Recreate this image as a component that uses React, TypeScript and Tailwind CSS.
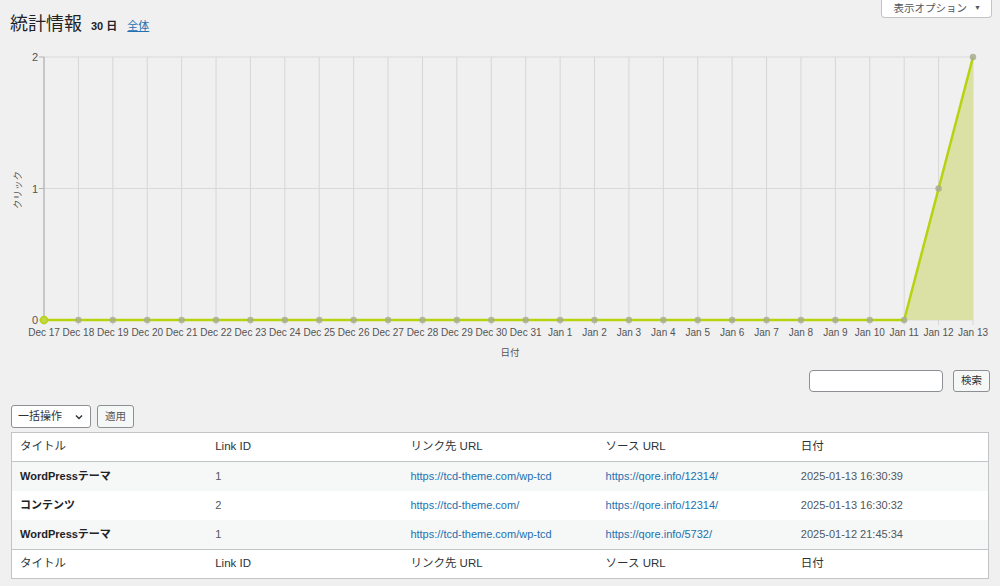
import React from "react";

const dates = [
  "Dec 17","Dec 18","Dec 19","Dec 20","Dec 21","Dec 22","Dec 23","Dec 24","Dec 25","Dec 26","Dec 27","Dec 28","Dec 29","Dec 30","Dec 31",
  "Jan 1","Jan 2","Jan 3","Jan 4","Jan 5","Jan 6","Jan 7","Jan 8","Jan 9","Jan 10","Jan 11","Jan 12","Jan 13",
];
const values = dates.map((_, i) => (i === 26 ? 1 : i === 27 ? 2 : 0));

const X0 = 44;
const X1 = 973;
const YTOP = 15;
const YBOT = 278;
const step = (X1 - X0) / (dates.length - 1);
const xAt = (i: number) => X0 + i * step;
const yAt = (v: number) => YBOT - (v / 2) * (YBOT - YTOP);

function Chart() {
  const linePts = values.map((v, i) => `${xAt(i)},${yAt(v)}`).join(" ");
  const fillPts = `${xAt(25)},${YBOT} ${xAt(26)},${yAt(1)} ${xAt(27)},${yAt(2)} ${xAt(27)},${YBOT}`;
  return (
    <svg width={1000} height={322} className="block" style={{ fontFamily: '"Liberation Sans", "Noto Sans CJK JP", sans-serif' }}>
      {[0, 1, 2].map((v) => (
        <line key={v} x1={X0} x2={X1} y1={yAt(v)} y2={yAt(v)} stroke="#d9d9d9" strokeWidth={1} />
      ))}
      {dates.map((_, i) => (
        <line key={i} x1={xAt(i)} x2={xAt(i)} y1={YTOP} y2={YBOT + 5} stroke="#d6d6d6" strokeWidth={1} />
      ))}
      <line x1={X0} x2={X0} y1={YTOP} y2={YBOT} stroke="#b4b4b4" strokeWidth={1.2} />
      {[0, 1, 2].map((v) => (
        <line key={"t" + v} x1={X0 - 5} x2={X0} y1={yAt(v)} y2={yAt(v)} stroke="#b4b4b4" strokeWidth={1} />
      ))}
      {[0, 1, 2].map((v) => (
        <text key={"l" + v} x={38} y={yAt(v) + 4} textAnchor="end" fontSize={11} fill="#545454">
          {v}
        </text>
      ))}
      <polygon points={fillPts} fill="#dbe1a4" />
      <polyline points={linePts} fill="none" stroke="#b7d20f" strokeWidth={2.5} strokeLinejoin="round" />
      {values.map((v, i) =>
        i === 0 ? (
          <circle key={i} cx={xAt(i)} cy={yAt(v)} r={3.5} fill="#c4d84a" stroke="#b7d20f" strokeWidth={1.5} />
        ) : (
          <circle key={i} cx={xAt(i)} cy={yAt(v)} r={3.2} fill="#a8ad90" fillOpacity={0.85} />
        )
      )}
      {dates.map((d, i) => (
        <text key={"d" + i} x={xAt(i)} y={294} textAnchor="middle" fontSize={10} fill="#545454">
          {d}
        </text>
      ))}
      <text x={510} y={314} textAnchor="middle" fontSize={9.5} fill="#545454">
        日付
      </text>
      <text x={0} y={0} transform="translate(21,148) rotate(-90)" textAnchor="middle" fontSize={9.5} fill="#545454">
        クリック
      </text>
    </svg>
  );
}

const rows = [
  { title: "WordPressテーマ", id: "1", link: "https://tcd-theme.com/wp-tcd", src: "https://qore.info/12314/", date: "2025-01-13 16:30:39" },
  { title: "コンテンツ", id: "2", link: "https://tcd-theme.com/", src: "https://qore.info/12314/", date: "2025-01-13 16:30:32" },
  { title: "WordPressテーマ", id: "1", link: "https://tcd-theme.com/wp-tcd", src: "https://qore.info/5732/", date: "2025-01-12 21:45:34" },
];

function HeadRow({ top }: { top?: boolean }) {
  return (
    <div
      className={`grid grid-cols-5 h-[29px] items-center text-[11.5px] text-[#2c3338] bg-white ${
        top ? "border-b border-[#c3c4c7]" : "border-t border-[#c3c4c7]"
      }`}
    >
      <div className="px-2">タイトル</div>
      <div className="px-2">Link ID</div>
      <div className="px-2">リンク先 URL</div>
      <div className="px-2">ソース URL</div>
      <div className="px-2">日付</div>
    </div>
  );
}

export default function App() {
  return (
    <div
      className="w-[1000px] h-[586px] bg-[#f0f0f1] relative overflow-hidden text-[#1d2327]"
      style={{ fontFamily: '"Liberation Sans", "Noto Sans CJK JP", sans-serif' }}
    >
      <div className="absolute right-[8px] top-0 h-[18px] pl-[12px] pr-[10px] bg-white border border-t-0 border-[#c3c4c7] rounded-b-[4px] flex items-center gap-[7px] text-[10.5px] text-[#50575e]">
        <span>表示オプション</span>
        <span className="text-[7px]">▼</span>
      </div>

      <div className="h-[42px] flex items-end pl-[10px] pb-[9px] gap-[9px]">
        <span className="text-[18px] leading-none">統計情報</span>
        <span className="text-[11px] font-bold leading-none mb-[1px]">30 日</span>
        <span className="text-[11px] text-[#2271b1] underline leading-none mb-[1px] ml-[1px]">全体</span>
      </div>

      <Chart />

      <div className="flex justify-end items-center gap-[10px] pr-[10px] mt-[6px]">
        <div className="w-[134px] h-[22px] bg-white border border-[#8c8f94] rounded-[4px]" />
        <div className="w-[37px] h-[22px] bg-[#f6f7f7] border border-[#8c8f94] rounded-[3px] flex items-center justify-center text-[10.5px] text-[#2c3338]">
          検索
        </div>
      </div>

      <div className="flex items-center gap-[6px] pl-[11px] mt-[13px]">
        <div className="w-[80px] h-[23px] bg-white border border-[#8c8f94] rounded-[3px] flex items-center justify-between pl-[6px] pr-[6px] text-[11px] text-[#2c3338]">
          <span>一括操作</span>
          <svg width="10" height="10" viewBox="0 0 10 10">
            <path d="M2 3.5 L5 6.5 L8 3.5" fill="none" stroke="#2c3338" strokeWidth="1.4" />
          </svg>
        </div>
        <div className="w-[37px] h-[23px] bg-[#f6f7f7] border border-[#8c8f94] rounded-[3px] flex items-center justify-center text-[10.5px] text-[#50575e]">
          適用
        </div>
      </div>

      <div className="mx-[11px] mt-[4px] border border-[#c3c4c7] bg-white">
        <HeadRow top />
        {rows.map((r, i) => (
          <div
            key={i}
            className={`grid grid-cols-5 h-[29px] items-center text-[11px] ${i % 2 === 0 ? "bg-[#f6f7f7]" : "bg-white"}`}
          >
            <div className="px-2 font-bold text-[#1d2327]">{r.title}</div>
            <div className="px-2 text-[#50575e]">{r.id}</div>
            <div className="px-2 text-[#2271b1]">{r.link}</div>
            <div className="px-2 text-[#2271b1]">{r.src}</div>
            <div className="px-2 text-[#50575e]">{r.date}</div>
          </div>
        ))}
        <HeadRow />
      </div>
    </div>
  );
}
